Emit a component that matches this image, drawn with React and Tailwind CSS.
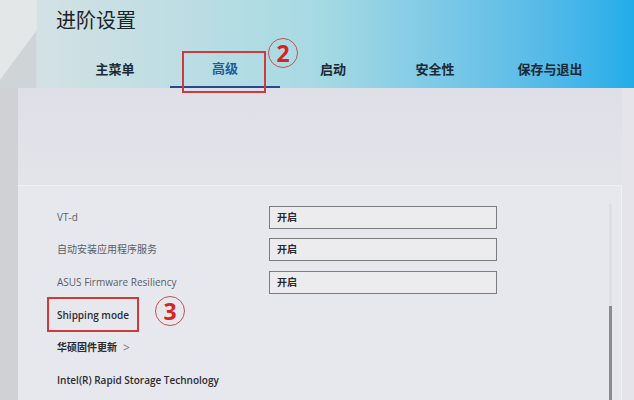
import React from 'react';

const tabs = [
  { label: '主菜单', w: 'w-[110px]' },
  { label: '高级', w: 'w-[110px]', active: true },
  { label: '启动', w: 'w-[106px]' },
  { label: '安全性', w: 'w-[98px]' },
  { label: '保存与退出', w: 'w-[132px]' },
];

const rows = [
  { label: 'VT-d', value: '开启' },
  { label: '自动安装应用程序服务', value: '开启' },
  { label: 'ASUS Firmware Resiliency', value: '开启' },
  { label: 'Shipping mode', strong: true },
  { label: '华硕固件更新', strong: true, arrow: true },
  { label: 'Intel(R) Rapid Storage Technology', strong: true },
];

// red circled number used as annotation
const Circled = ({ n, className }) => (
  <div
    className={`absolute w-[30px] h-[30px] rounded-full border-[1.5px] border-[#c9504f] flex items-center justify-center text-[#d8241f] text-[23px] font-bold leading-none ${className}`}
  >
    {n}
  </div>
);

const App = () => {
  return (
    <div
      className="relative w-[634px] h-[400px] overflow-hidden bg-[#dfe0e7] flex flex-col"
      style={{ fontFamily: '"Open Sans", "Noto Sans CJK SC", sans-serif' }}
    >
      {/* header */}
      <div className="relative h-[88px] shrink-0 bg-gradient-to-r from-[#d9e2e4] via-[#a6dae3] to-[#1fade9] flex flex-col">
        <svg className="absolute left-0 top-0" width="60" height="88" viewBox="0 0 60 88">
          <polygon points="0,0 37,0 37,30 0,80" fill="#e3e7e8" />
          <polygon points="0,80 37,30 37,88 0,88" fill="#cfd4d6" />
          <line x1="37" y1="0" x2="37" y2="88" stroke="#dce2e4" strokeWidth="1" />
        </svg>
        <div className="relative pl-[56px] pt-[7px] text-[20px] leading-[28px] text-[#1e2428]">进阶设置</div>
        <div className="relative mt-auto flex pl-[60px] h-[36px]">
          {tabs.map((t) => (
            <div
              key={t.label}
              className={`${t.w} flex items-center justify-center text-[13px] font-bold ${
                t.active ? 'text-[#1f5c9e] border-b-2 border-[#2a4592]' : 'text-[#1c2a36]'
              }`}
            >
              {t.label}
            </div>
          ))}
        </div>
      </div>

      {/* body */}
      <div className="flex flex-1">
        <div className="w-[18px] bg-[#cfd1d5]" />
        <div className="flex-1 flex flex-col">
          <div className="h-[97px] bg-gradient-to-b from-[#dfe0e7] to-[#e3e3ea]" />
          <div className="flex-1 flex bg-[#e7e7ee] border-t border-[#efeff4]">
            <div className="flex-1 flex flex-col pt-[15px] pl-[39px]">
              {rows.map((r) => (
                <div key={r.label} className="h-[32.6px] flex items-center">
                  <div
                    className={`w-[212px] text-[10px] ${
                      r.strong ? 'text-[#2a2c30] font-semibold' : 'text-[#5b5e66]'
                    } flex items-center gap-[6px]`}
                  >
                    {r.label}
                    {r.arrow && <span className="text-[#777] text-[12px] font-normal">&gt;</span>}
                  </div>
                  {r.value && (
                    <div className="w-[228px] h-[23px] border border-[#7b7c80] bg-[#ececef] flex items-center pl-[7px] text-[10px] font-bold text-[#2a2a2e]">
                      {r.value}
                    </div>
                  )}
                </div>
              ))}
            </div>
            {/* scrollbar */}
            <div className="w-[18px] flex pt-[18px] pl-[5px] border-r border-[#f2f2f6]">
              <div className="w-[3px] flex flex-col bg-[#dedee4]">
                <div className="h-[102px]" />
                <div className="flex-1 bg-[#8a8b90]" />
              </div>
            </div>
          </div>
        </div>
        <div className="w-[12px] bg-[#e4e4ea]" />
      </div>

      {/* annotations */}
      <div className="absolute left-[182px] top-[51px] w-[84px] h-[42px] border-2 border-[#cf3b3d]" />
      <Circled n="2" className="left-[268px] top-[38px]" />
      <div className="absolute left-[47px] top-[297px] w-[92px] h-[35px] border-2 border-[#cf3b3d]" />
      <Circled n="3" className="left-[155px] top-[296px]" />
    </div>
  );
};

export default App;
